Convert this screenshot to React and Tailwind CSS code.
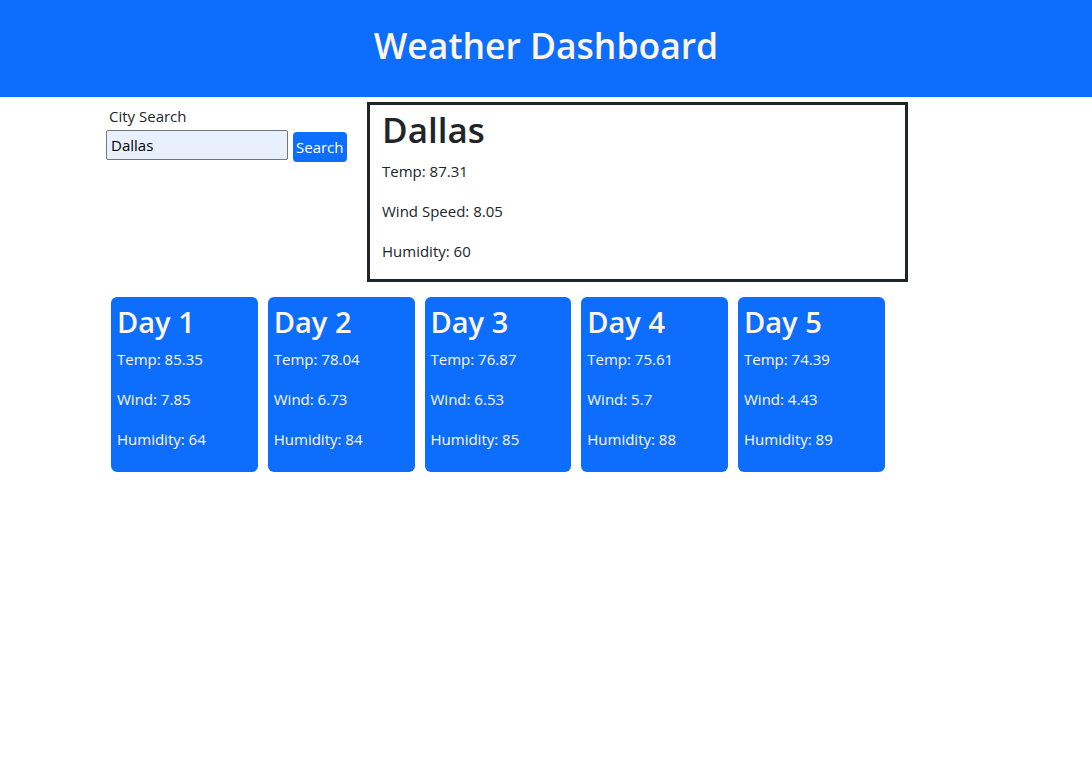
export default function App() {
  const days = [
    { d: "Day 1", t: "85.35", w: "7.85", h: "64" },
    { d: "Day 2", t: "78.04", w: "6.73", h: "84" },
    { d: "Day 3", t: "76.87", w: "6.53", h: "85" },
    { d: "Day 4", t: "75.61", w: "5.7", h: "88" },
    { d: "Day 5", t: "74.39", w: "4.43", h: "89" },
  ];
  const font = { fontFamily: '"Open Sans", "Noto Sans", sans-serif' };
  return (
    <div className="min-h-[760px] bg-white text-[#212529]" style={font}>
      <header className="h-[97px] bg-[#0d6efd] flex items-center justify-center">
        <h1 className="text-[35.5px] font-semibold text-[#fdf5e6] leading-none -mt-[6px]">Weather Dashboard</h1>
      </header>
      <div className="flex pl-[106px] pt-[5px]">
        <div className="w-[261px] flex flex-col pt-[3px]">
          <label className="text-[15px] leading-[22px] pl-[3px]">City Search</label>
          <div className="flex items-start mt-[3px]">
            <input
              defaultValue="Dallas"
              className="w-[182px] h-[30px] bg-[#e8f0fe] border border-[#767676] rounded-[2px] px-[4px] text-[15px] text-black outline-none"
              style={font}
            />
            <button className="ml-[5px] mt-[2px] h-[30px] px-[3px] bg-[#0d6efd] text-white text-[15px] rounded-[4px]">
              Search
            </button>
          </div>
        </div>
        <div className="w-[541px] h-[180px] border-[3px] border-[#212529] pl-[12px] pt-[1px]">
          <h2 className="text-[35px] font-semibold leading-[48px] mb-[5px]">Dallas</h2>
          <p className="text-[15px] leading-[24px] mb-[16px]">Temp: 87.31</p>
          <p className="text-[15px] leading-[24px] mb-[16px]">Wind Speed: 8.05</p>
          <p className="text-[15px] leading-[24px]">Humidity: 60</p>
        </div>
      </div>
      <div className="flex gap-[10px] pl-[111px] pt-[15px]">
        {days.map((x) => (
          <div key={x.d} className="w-[146.75px] h-[175px] bg-[#0d6efd] rounded-[6px] text-[#fdf5e6] pl-[6px] pt-[6px]">
            <h3 className="text-[29px] font-semibold leading-[38px] mb-[6px]">{x.d}</h3>
            <p className="text-[15px] leading-[24px] mb-[16px]">Temp: {x.t}</p>
            <p className="text-[15px] leading-[24px] mb-[16px]">Wind: {x.w}</p>
            <p className="text-[15px] leading-[24px]">Humidity: {x.h}</p>
          </div>
        ))}
      </div>
    </div>
  );
}
